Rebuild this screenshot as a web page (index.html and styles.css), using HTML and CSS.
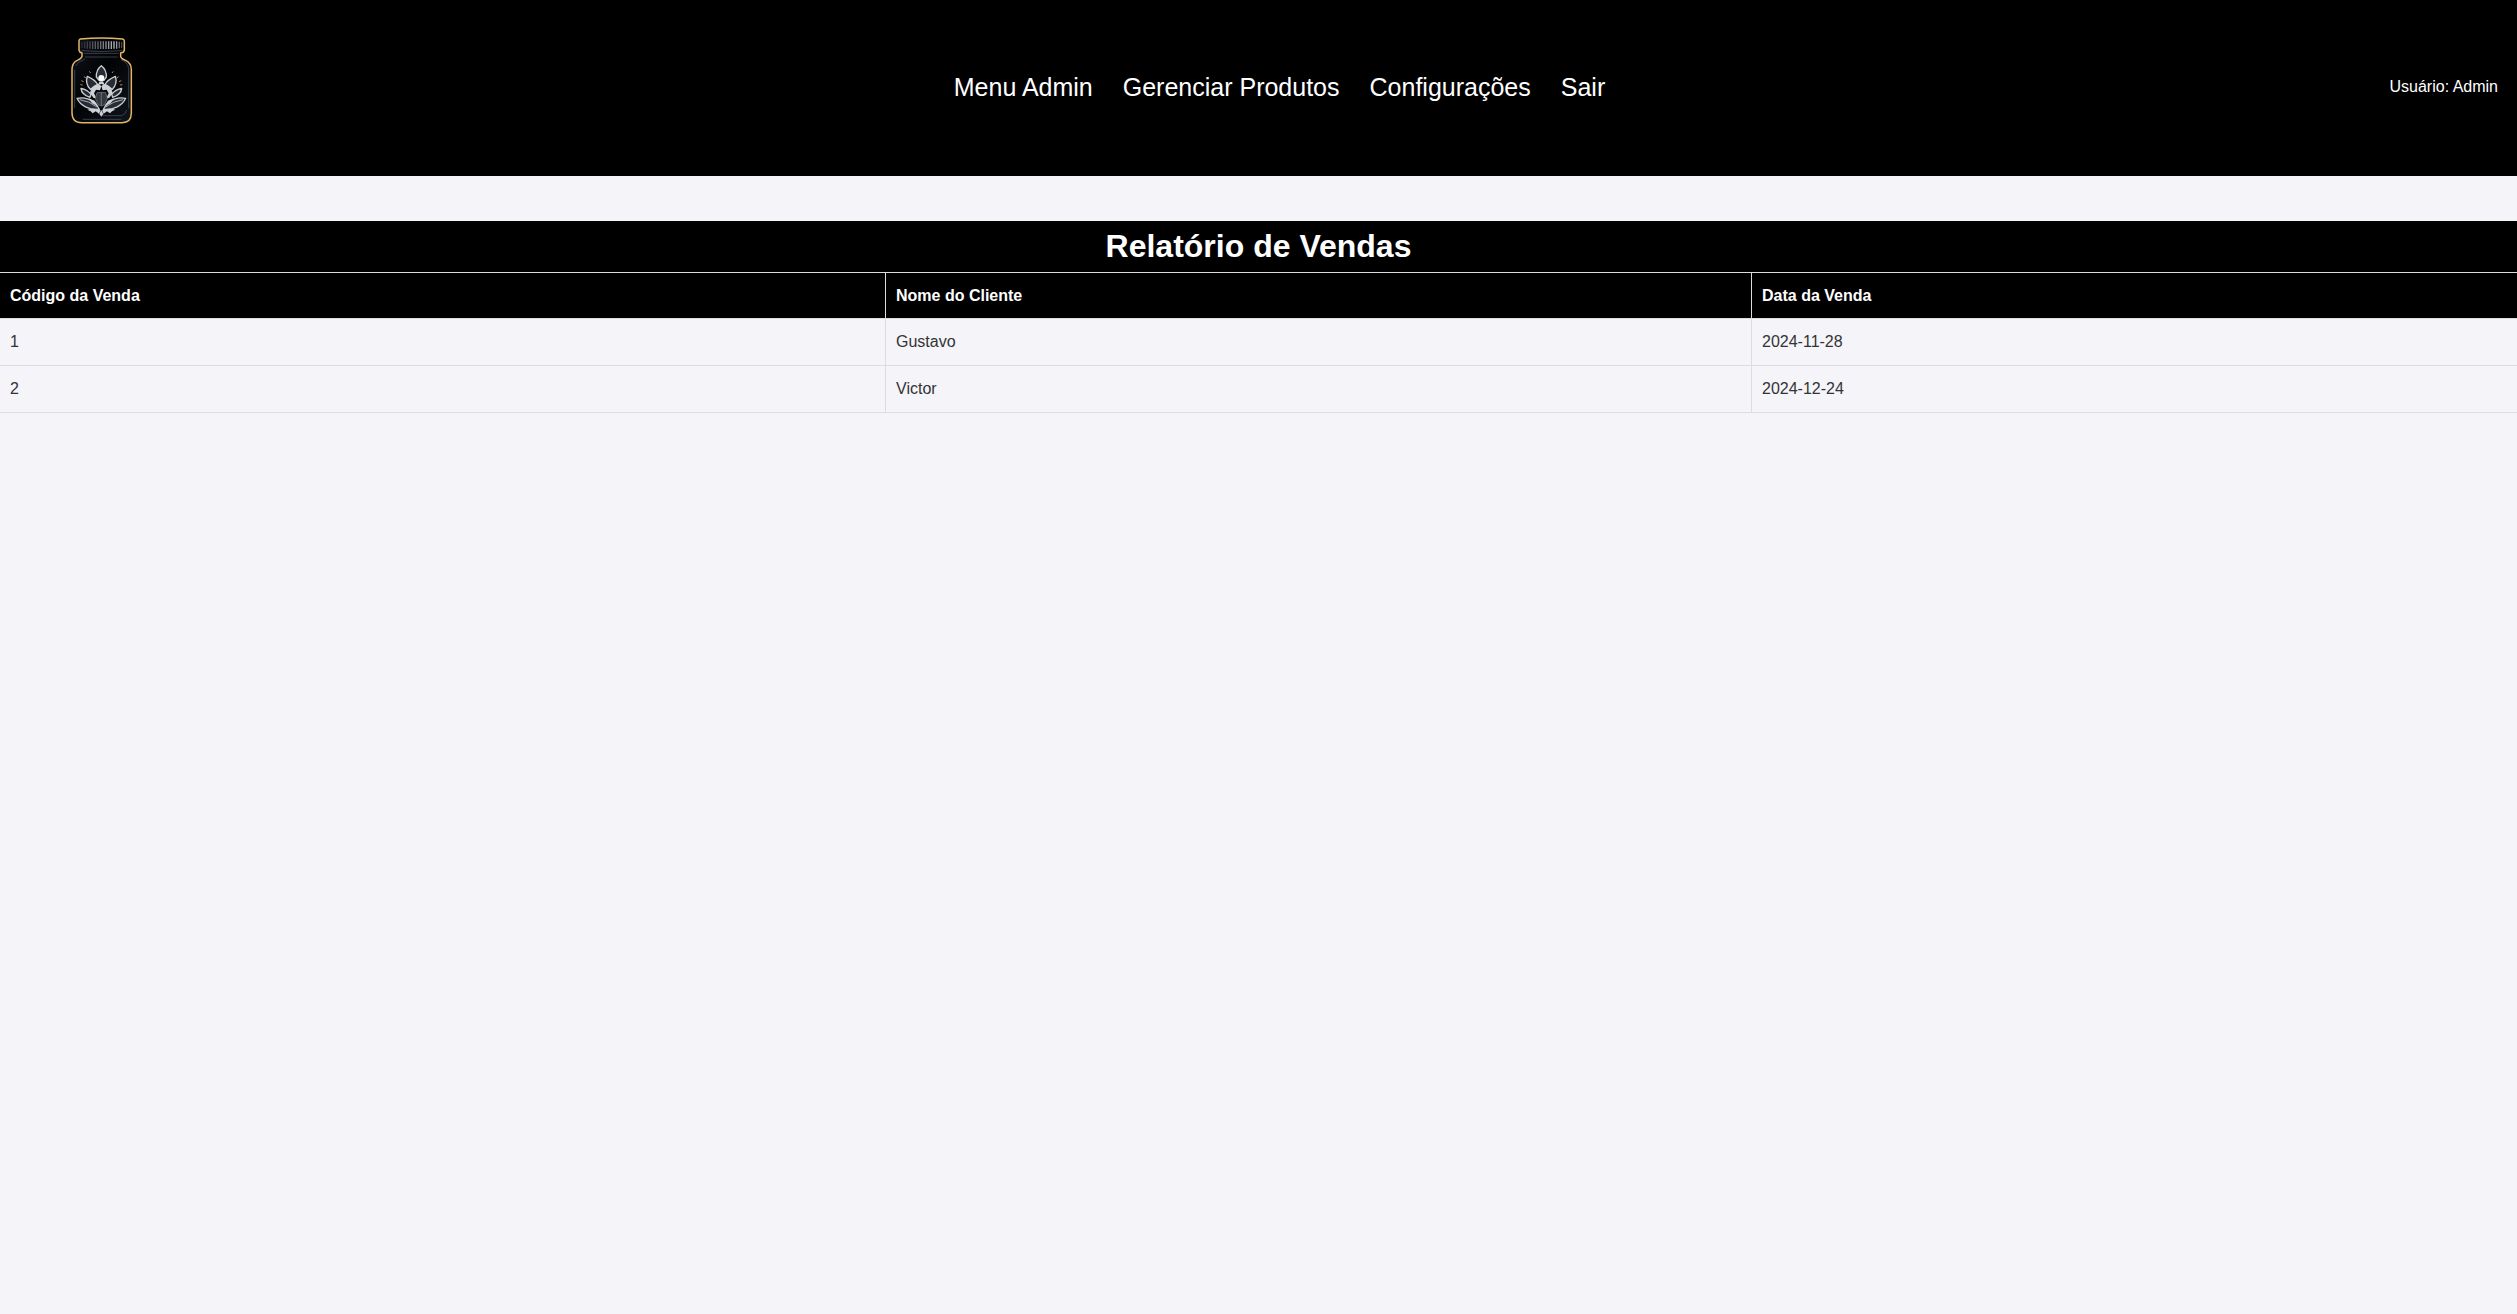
FILE: index.html
```html
<!DOCTYPE html>
<html lang="pt-BR">
<head>
<meta charset="UTF-8">
<title>Relatório de Vendas</title>
<link rel="stylesheet" href="styles.css">
</head>
<body>
<header class="header">
  <svg class="logo" viewBox="0 0 252 300" aria-label="Logo">
    <defs>
      <linearGradient id="glass" x1="0" y1="0" x2="1" y2="1">
        <stop offset="0" stop-color="#10141d"/><stop offset=".45" stop-color="#020306"/><stop offset="1" stop-color="#10141c"/>
      </linearGradient>
      <linearGradient id="lid" gradientUnits="userSpaceOnUse" x1="60" y1="0" x2="190" y2="0">
        <stop offset="0" stop-color="#22252b"/><stop offset=".5" stop-color="#70747c"/><stop offset=".8" stop-color="#b8babd"/><stop offset="1" stop-color="#24262c"/>
      </linearGradient>
      <g id="half">
        <path class="petal" d="M118 238C86 240 61 227 51 205C73 200 99 209 112 228Z"/>
        <path class="vein" d="M59 209Q88 213 111 231"/>
        <path class="petal" d="M90 202C72 196 64 188 63 175C76 177 86 184 93 193Z"/>
        <path class="petal" d="M91 178C79 166 77 154 82 139C96 145 108 153 113 164Z"/>
        <path class="fill" d="M90 188Q94 166 115 162L124 168L120 181L108 179L102 190L110 206L100 203Z"/>
        <path class="chest" d="M111 188L106 205L114 224L124 228V187Z"/>
        <path class="fill" d="M86 205L104 212L114 229L96 220ZM82 239Q101 233 122 241L117 251L107 244L98 250L92 244Z"/>
        <path class="sparks" d="M72 140L78 144M64 152L71 155M61 164L68 165M88 124L92 129"/>
      </g>
    </defs>
    <path class="jar" d="M61 27Q57 28 57 34V61Q58 67 66 69V79Q64 86 52 91Q36 98 36 120V248Q36 278 66 278H186Q214 278 214 249V119Q214 99 197 91Q183 86 182 79V69Q193 67 193 60V34Q193 28 188 27Q124 21 61 27Z"/>
    <path class="ridges" d="M66 36V54M74 35V55M82 34V56M90 34V56M98 34V57M106 34V57M114 34V57M122 34V57M130 34V57M138 34V57M146 34V57M154 34V57M162 34V56M170 34V56M178 35V55M185 36V54"/>
    <path class="shine" d="M64 62Q124 67 187 62M72 70H176M75 81H173M75 87Q52 95 47 108M183 89Q203 97 206 115V235M44 119V235M68 268H184M128 257H185Q198 252 200 240"/>
    <path class="petal" d="M109 141Q108 119 124 107Q140 119 139 141L132 151H117Z"/>
    <use href="#half"/>
    <use href="#half" transform="translate(248 0) scale(-1 1)"/>
    <circle cx="124" cy="144" r="9" fill="#fff"/>
    <path class="fill" d="M119 154H129L135 166L124 162L113 166ZM124 240L130 252L124 260L118 252Z"/>
  </svg>
  <nav class="nav">
    <a>Menu Admin</a><a>Gerenciar Produtos</a><a>Configurações</a><a>Sair</a>
  </nav>
  <div class="user">Usuário: Admin</div>
</header>
<main class="report">
  <h1 class="title">Relatório de Vendas</h1>
  <table class="sales">
    <colgroup><col class="col-code"><col class="col-name"><col></colgroup>
    <thead><tr><th>Código da Venda</th><th>Nome do Cliente</th><th>Data da Venda</th></tr></thead>
    <tbody>
      <tr><td>1</td><td>Gustavo</td><td>2024-11-28</td></tr>
      <tr><td>2</td><td>Victor</td><td>2024-12-24</td></tr>
    </tbody>
  </table>
</main>
</body>
</html>
```
FILE: styles.css
```css
* { box-sizing: border-box; }
body {
  margin: 0;
  background: #f4f4f9;
  color: #333;
  font: 16px/18px Arial, "Liberation Sans", sans-serif;
}
.header {
  display: grid;
  grid-template-columns: 1fr auto 1fr;
  align-items: center;
  height: 176px;
  padding: 0 19px 2px 60px;
  background: #000;
  color: #fff;
}
.logo { width: 84px; height: 100px; margin-bottom: 14px; }
.jar { fill: url(#glass); stroke: #e0b766; stroke-width: 4.5; }
.ridges { fill: none; stroke: url(#lid); stroke-width: 4; }
.shine { fill: none; stroke: #535962; stroke-width: 2; }
.petal { fill: #262b34; stroke: #c9cdd2; stroke-width: 4; stroke-linejoin: round; }
.chest { fill: #33373f; stroke: #7d828a; stroke-width: 2; }
.vein { fill: none; stroke: #a5abb4; stroke-width: 3; }
.fill { fill: #cdd1d6; }
.sparks { fill: none; stroke: #b08a49; stroke-width: 3; }
.nav {
  display: flex;
  gap: 30px;
  margin-right: -1px;
  font-size: 25px;
  line-height: 28px;
}
.user { justify-self: end; }
.report { padding-top: 45px; }
.title {
  height: 51px;
  margin: 0;
  background: #000;
  color: #fff;
  font-size: 32px;
  line-height: 51px;
  text-align: center;
}
.sales {
  width: 100%;
  table-layout: fixed;
  border-spacing: 0;
  border-bottom: 1px solid #ddd;
}
.col-code { width: 885px; }
.col-name { width: 866px; }
.sales th, .sales td {
  height: 47px;
  padding: 0 10px;
  border-top: 1px solid #ddd;
  text-align: left;
}
.sales th { height: 46px; background: #000; color: #fff; }
.sales th + th, .sales td + td { border-left: 1px solid #ddd; }
```
